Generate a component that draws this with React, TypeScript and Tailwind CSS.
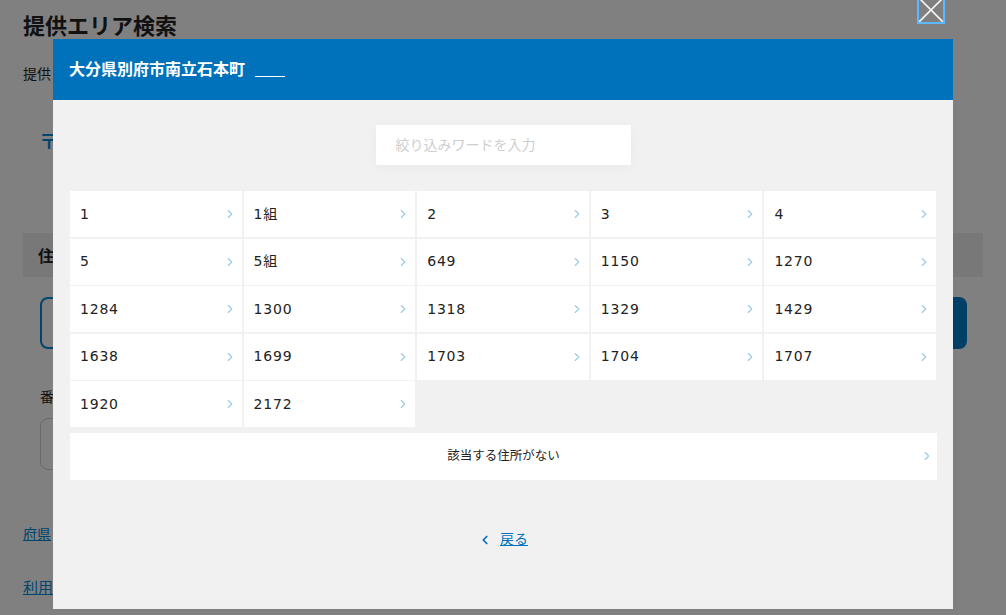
import React from 'react';
import { ChevronRight, ChevronLeft } from 'lucide-react';

const FONT = "font-['DejaVu_Sans','Noto_Sans_CJK_JP',sans-serif]";

const NUMBERS = [
  '1', '1組', '2', '3', '4',
  '5', '5組', '649', '1150', '1270',
  '1284', '1300', '1318', '1329', '1429',
  '1638', '1699', '1703', '1704', '1707',
  '1920', '2172',
];

function Background() {
  return (
    <div className="h-[615px] overflow-hidden bg-[#808080] px-[23px] pt-[10px] text-[#111]">
      <h1 className="text-[22px] leading-[28px] font-bold font-['Noto_Sans_CJK_JP',sans-serif]">提供エリア検索</h1>
      <p className="mt-[25px] text-[14px] leading-[20px] font-['Noto_Sans_CJK_JP',sans-serif]">提供</p>
      <p className="mt-[46px] ml-[16px] text-[20px] leading-[24px] font-bold text-[#00456e] font-['Noto_Sans_CJK_JP',sans-serif]">〒</p>
      <div className="mt-[80px] h-[44px] w-[960px] bg-[#787878] pl-[15px] text-[16px] leading-[44px] font-bold font-['Noto_Sans_CJK_JP',sans-serif]">住</div>
      <div className="mt-[20px] ml-[17px] flex h-[52px] w-[927px]">
        <div className="flex-1 rounded-l-[8px] border-2 border-[#00456e]" />
        <div className="w-[100px] rounded-r-[8px] bg-[#003f66]" />
      </div>
      <p className="mt-[37px] ml-[17px] text-[14px] leading-[20px] font-['Noto_Sans_CJK_JP',sans-serif]">番</p>
      <div className="mt-[12px] ml-[17px] h-[52px] w-[400px] rounded-[8px] border border-[#6a6a6a]" />
      <a className="mt-[53px] block w-fit text-[14px] leading-[20px] text-[#00456e] underline font-['Noto_Sans_CJK_JP',sans-serif]">府県</a>
      <a className="mt-[34px] flex w-fit items-center gap-[7px] text-[15px] leading-[20px] text-[#00456e] font-['Noto_Sans_CJK_JP',sans-serif]">
        <span className="underline">利用可能なエリアはこちら</span>
        <span className="h-[11px] w-[13px] border border-[#00456e]" />
      </a>
    </div>
  );
}

function Cell({ label }: { label: string }) {
  return (
    <div className="relative flex h-[46px] items-center bg-white pl-[10px] text-[14px] tracking-[0.8px] text-[#222]">
      {label}
      <ChevronRight size={14} strokeWidth={2} className="absolute right-[5px] top-[16px] text-[#9ccbe9]" />
    </div>
  );
}

function Modal() {
  return (
    <div className={`absolute left-[53px] top-[39px] h-[570px] w-[900px] bg-[#f1f1f1] ${FONT}`}>
      <div className="flex h-[61px] items-center bg-[#0071bb] pl-[16px] text-[16px] font-bold text-white">
        大分県別府市南立石本町
        <span className="ml-[10px] mt-[13px] h-px w-[30px] bg-white" />
      </div>
      <div className="px-[17px] pt-[25px]">
        <div className="mx-auto flex h-[40px] w-[255px] items-center bg-white pl-[20px] text-[14px] text-[#cfcfcf] shadow-[0_2px_12px_rgba(0,0,0,0.04)]">
          絞り込みワードを入力
        </div>
        <div className="mt-[26px] grid w-[866px] grid-cols-5 gap-x-[2px] gap-y-[1.5px]">
          {NUMBERS.map((n) => (
            <Cell key={n} label={n} />
          ))}
        </div>
        <div className="relative mt-[6px] flex h-[47px] w-[867px] items-center justify-center bg-white text-[12.5px] text-[#222]">
          該当する住所がない
          <ChevronRight size={14} strokeWidth={2} className="absolute right-[3px] top-[16px] text-[#9ccbe9]" />
        </div>
        <div className="mt-[49px] flex items-center justify-center gap-[8px] text-[14px] text-[#0071bb]">
          <ChevronLeft size={14} strokeWidth={3} />
          <a className="underline">戻る</a>
        </div>
      </div>
    </div>
  );
}

function CloseButton() {
  return (
    <button className="absolute left-[917px] top-[-4px] h-[28px] w-[28px] border-2 border-[#5db8ff]">
      <svg viewBox="0 0 24 24" className="h-full w-full" fill="none" stroke="#f5f5f5" strokeWidth="1.6">
        <path d="M0 0 L24 24 M24 0 L0 24" />
      </svg>
    </button>
  );
}

export default function App() {
  return (
    <div className="relative h-[615px] w-[1006px] overflow-hidden">
      <Background />
      <Modal />
      <CloseButton />
    </div>
  );
}
